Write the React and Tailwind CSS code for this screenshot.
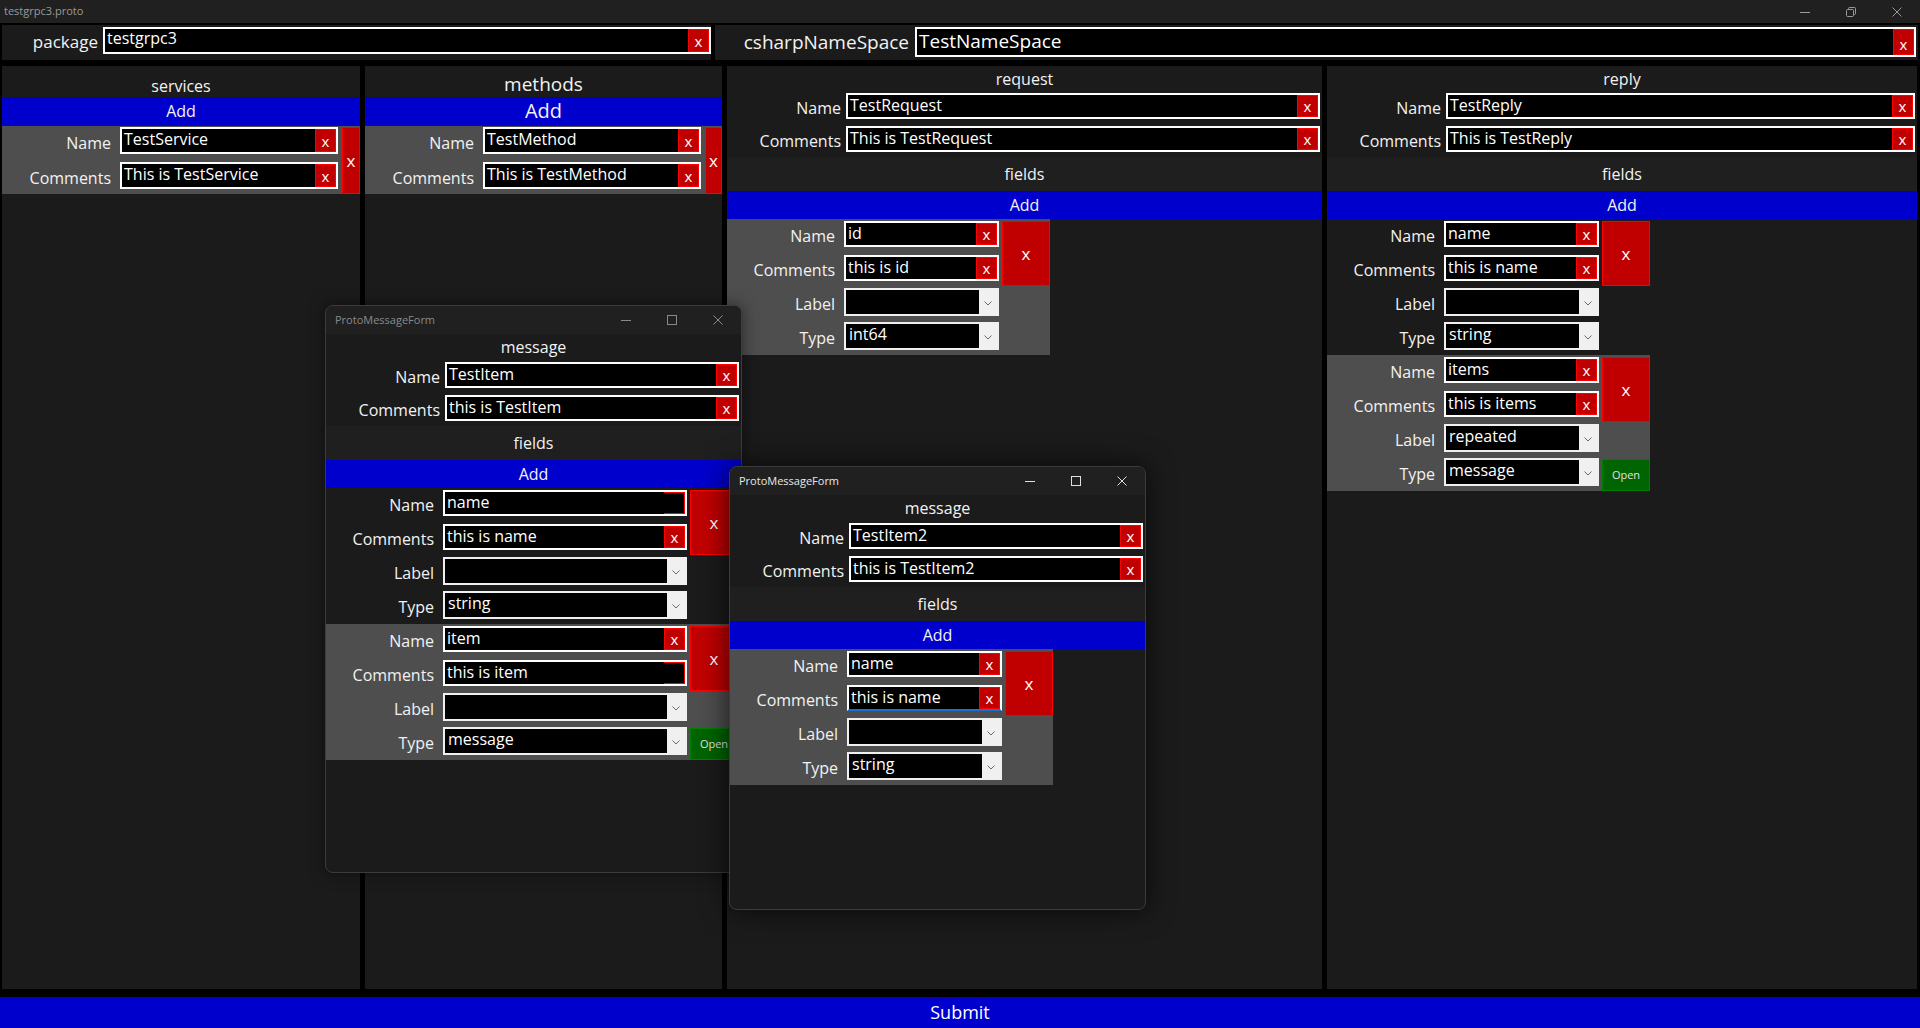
import React from "react";

const labelCls = "shrink-0 text-right text-[16px] leading-[20px] text-[#f2f2f2]";

function SmallX({ ghost }) {
  if (ghost) return <div className="w-[21px] shrink-0 border border-l-0 border-[#ff0000]" />;
  return (
    <div className="flex w-[21px] shrink-0 items-end justify-center border border-[#ff0000] bg-[#c00000] pb-[1px] text-[15px] leading-[18px] text-white">
      x
    </div>
  );
}

function TextBox({ value, x = "x", className = "", text = "text-[16px] leading-[20px]", focus = false }) {
  return (
    <div className={`flex border-2 border-white bg-black ${focus ? "border-b-[#1a6fd6]" : ""} ${className}`}>
      <div className={`min-w-0 flex-1 whitespace-nowrap pl-[2px] text-white ${text}`}>{value}</div>
      {x === "x" && <SmallX />}
      {x === "ghost" && <SmallX ghost />}
    </div>
  );
}

function Combo({ value, className = "" }) {
  return (
    <div className={`-mt-[1px] flex h-[28px] border-2 border-[#f0f0f0] bg-[#f0f0f0] ${className}`}>
      <div className="min-w-0 flex-1 bg-black pl-[3px] text-[16px] leading-[20px] text-white">{value}</div>
      <div className="flex w-[18px] items-center justify-center pt-[2px]">
        <svg width="8" height="5" viewBox="0 0 8 5">
          <path d="M0.5 0.5L4 4L7.5 0.5" fill="none" stroke="#6a6a6a" strokeWidth="1" />
        </svg>
      </div>
    </div>
  );
}

function Row({ label, children }) {
  return (
    <div className="flex h-[34px] items-start pt-[2px]">
      <div className={`w-[117px] pr-[9px] pt-[5px] ${labelCls}`}>{label}</div>
      {children}
    </div>
  );
}

function FieldItem({ f, gray, inputW = "w-[155px]" }) {
  return (
    <div className={`flex w-fit ${gray ? "bg-[#4e4e4e]" : ""}`}>
      <div className="flex flex-col">
        <Row label="Name">
          <TextBox value={f.name} x={f.nameX || "x"} className={`h-[26px] ${inputW}`} />
        </Row>
        <Row label="Comments">
          <TextBox value={f.comments} x={f.commentsX || "x"} focus={f.focus} className={`h-[26px] ${inputW}`} />
        </Row>
        <Row label="Label">
          <Combo value={f.label} className={inputW} />
        </Row>
        <Row label="Type">
          <Combo value={f.type} className={inputW} />
        </Row>
      </div>
      <div className="ml-[3px] flex w-[48px] flex-col pt-[2px]">
        <div className="flex h-[65px] items-center justify-center border border-[#ff0000] bg-[#c00000] text-[17px] text-white">
          x
        </div>
        {f.open && (
          <div className="mt-auto flex h-[32px] items-center justify-center border border-[#008000] bg-[#006400] text-[11px] text-[#e2e2e2]">
            Open
          </div>
        )}
      </div>
    </div>
  );
}

function ServiceItem({ name, comments }) {
  return (
    <div className="mt-[1px] flex bg-[#4e4e4e]">
      <div className="flex flex-col">
        <div className="flex h-[35px] items-start pt-[1px]">
          <div className={`w-[118px] pr-[9px] pt-[6px] ${labelCls}`}>Name</div>
          <TextBox value={name} className="h-[27px] w-[218px]" />
        </div>
        <div className="flex h-[33px] items-start pt-[1px]">
          <div className={`w-[118px] pr-[9px] pt-[6px] ${labelCls}`}>Comments</div>
          <TextBox value={comments} className="h-[27px] w-[218px]" />
        </div>
      </div>
      <div className="ml-[4px] mt-[1px] flex h-[67px] w-[18px] items-center justify-center border border-[#ff0000] bg-[#c00000] text-[17px] text-white">
        x
      </div>
    </div>
  );
}

function HeaderRow({ label, value }) {
  return (
    <div className="flex h-[33px] items-start pr-[2px] pt-[2px]">
      <div className={`w-[116px] pr-[2px] pt-[5px] ${labelCls}`}>{label}</div>
      <TextBox value={value} className="ml-[3px] h-[26px] flex-1" />
    </div>
  );
}

function MessageHeader({ title, titleH, name, comments }) {
  return (
    <>
      <div className={`flex ${titleH} items-center justify-center text-[16px]`}>{title}</div>
      <HeaderRow label="Name" value={name} />
      <HeaderRow label="Comments" value={comments} />
      <div className="flex h-[34px] items-center justify-center bg-[#1f1f1f] text-[16px]">fields</div>
      <div className="flex h-[28px] items-center justify-center bg-[#0000cd] text-[16px]">Add</div>
    </>
  );
}

function WinButtons({ color, restore }) {
  return (
    <div className="flex h-full">
      <div className="flex w-[46px] items-center justify-center">
        <svg width="10" height="10" viewBox="0 0 10 10">
          <path d="M0 5.5h10" stroke={color} strokeWidth="1" />
        </svg>
      </div>
      <div className="flex w-[46px] items-center justify-center">
        {restore ? (
          <svg width="10" height="10" viewBox="0 0 10 10" fill="none" stroke={color} strokeWidth="1">
            <rect x="0.5" y="2.5" width="7" height="7" rx="1" />
            <path d="M2.5 2.5V1.5a1 1 0 0 1 1-1h5a1 1 0 0 1 1 1v5a1 1 0 0 1-1 1h-1" />
          </svg>
        ) : (
          <svg width="10" height="10" viewBox="0 0 10 10">
            <rect x="0.5" y="0.5" width="9" height="9" fill="none" stroke={color} strokeWidth="1" />
          </svg>
        )}
      </div>
      <div className="flex w-[46px] items-center justify-center">
        <svg width="10" height="10" viewBox="0 0 10 10">
          <path d="M0.5 0.5l9 9M9.5 0.5l-9 9" stroke={color} strokeWidth="1" />
        </svg>
      </div>
    </div>
  );
}

function Dialog({ className, active, children }) {
  return (
    <div className={`absolute flex flex-col overflow-hidden rounded-[8px] border border-[#3c3c3c] bg-[#1b1b1b] ${className}`}>
      <div className="flex h-[28px] shrink-0 items-center bg-[#202020]">
        <span className={`pl-[9px] text-[11px] ${active ? "text-[#e8e8e8]" : "text-[#8a8a8a]"}`}>ProtoMessageForm</span>
        <div className="ml-auto h-full">
          <WinButtons color={active ? "#e0e0e0" : "#8a8a8a"} />
        </div>
      </div>
      {children}
    </div>
  );
}

export default function App() {
  return (
    <div className="relative flex h-[1028px] w-[1920px] flex-col overflow-hidden bg-black font-['Open_Sans','Noto_Sans','Liberation_Sans',sans-serif] text-[#f2f2f2]">
      <div className="flex h-[23px] shrink-0 items-center bg-[#202020]">
        <span className="pl-[4px] text-[11px] text-[#9a9a9a]">testgrpc3.proto</span>
        <div className="ml-auto h-full">
          <WinButtons color="#9a9a9a" restore />
        </div>
      </div>

      <div className="mt-[2px] flex h-[35px] shrink-0 gap-[4px] px-[2px]">
        <div className="flex w-[709px] items-start bg-[#1b1b1b] pt-[2px]">
          <div className="w-[96px] pt-[5px] text-right text-[17px] leading-[20px]">package</div>
          <TextBox value="testgrpc3" text="text-[16px] leading-[19px]" className="ml-[5px] h-[27px] flex-1" />
        </div>
        <div className="flex flex-1 items-start bg-[#1b1b1b] pr-[2px] pt-[2px]">
          <div className="w-[194px] pt-[3px] text-right text-[19px] leading-[24px]">csharpNameSpace</div>
          <TextBox value="TestNameSpace" text="text-[19px] leading-[24px]" className="ml-[6px] h-[30px] flex-1" />
        </div>
      </div>

      <div className="mt-[6px] flex min-h-0 flex-1 gap-[5px] pl-[2px] pr-[3px]">
        <div className="flex w-[358px] shrink-0 flex-col bg-[#1b1b1b]">
          <div className="h-[31px] pt-[10px] text-center text-[16px] leading-[20px]">services</div>
          <div className="flex h-[28px] items-center justify-center bg-[#0000cd] text-[16px]">Add</div>
          <ServiceItem name="TestService" comments="This is TestService" />
        </div>
        <div className="flex w-[357px] shrink-0 flex-col bg-[#1b1b1b]">
          <div className="h-[31px] pt-[6px] text-center text-[19px] leading-[24px]">methods</div>
          <div className="flex h-[28px] items-center justify-center bg-[#0000cd] text-[20px]">Add</div>
          <ServiceItem name="TestMethod" comments="This is TestMethod" />
        </div>
        <div className="flex w-[595px] shrink-0 flex-col bg-[#1b1b1b]">
          <MessageHeader title="request" titleH="h-[25px]" name="TestRequest" comments="This is TestRequest" />
          <FieldItem gray f={{ name: "id", comments: "this is id", label: "", type: "int64" }} />
        </div>
        <div className="flex flex-1 flex-col bg-[#1b1b1b]">
          <MessageHeader title="reply" titleH="h-[25px]" name="TestReply" comments="This is TestReply" />
          <FieldItem f={{ name: "name", comments: "this is name", label: "", type: "string" }} />
          <FieldItem gray f={{ name: "items", comments: "this is items", label: "repeated", type: "message", open: true }} />
        </div>
      </div>

      <div className="mt-[8px] flex h-[31px] shrink-0 items-center justify-center bg-[#0000cd] text-[18px] text-white">
        Submit
      </div>

      <Dialog className="left-[325px] top-[305px] h-[568px] w-[417px] shadow-[0_0_16px_rgba(0,0,0,0.5)]">
        <MessageHeader title="message" titleH="h-[26px]" name="TestItem" comments="this is TestItem" />
        <FieldItem
          inputW="w-[244px]"
          f={{ name: "name", nameX: "ghost", comments: "this is name", label: "", type: "string" }}
        />
        <FieldItem
          gray
          inputW="w-[244px]"
          f={{ name: "item", comments: "this is item", commentsX: "ghost", label: "", type: "message", open: true }}
        />
      </Dialog>

      <Dialog active className="left-[729px] top-[466px] h-[444px] w-[417px] shadow-[0_0_28px_rgba(0,0,0,0.7)]">
        <MessageHeader title="message" titleH="h-[26px]" name="TestItem2" comments="this is TestItem2" />
        <FieldItem gray f={{ name: "name", comments: "this is name", focus: true, label: "", type: "string" }} />
      </Dialog>
    </div>
  );
}
